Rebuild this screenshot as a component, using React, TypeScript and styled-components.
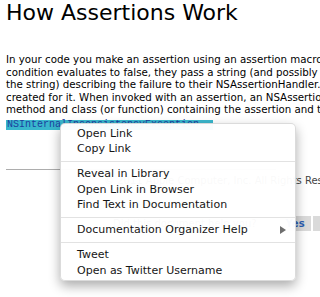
import React from "react";
import styled, { createGlobalStyle } from "styled-components";

const GlobalStyle = createGlobalStyle`
  html, body {
    margin: 0;
    padding: 0;
    background: #fff;
    overflow: hidden;
  }
  body {
    font-family: "DejaVu Sans", "Liberation Sans", sans-serif;
    color: #000;
  }
`;

const Page = styled.div`
  position: relative;
  width: 320px;
  height: 297px;
  padding-left: 6px;
  box-sizing: border-box;
  overflow: hidden;
`;

const Title = styled.h1`
  margin: 0;
  font-size: 22px;
  line-height: 26px;
  font-weight: normal;
  white-space: nowrap;
`;

const Para = styled.p`
  margin: 27px 0 0;
  font-size: 10.25px;
  line-height: 12.5px;
`;

const Line = styled.span`
  display: block;
  white-space: nowrap;
`;

const Selected = styled.div`
  width: fit-content;
  margin-top: 4.3px;
  height: 10px;
  line-height: 10px;
  padding: 0 14px 0 1px;
  font-family: "Liberation Mono", "DejaVu Sans Mono", monospace;
  font-size: 10px;
  color: #1c3f9e;
  background: #38b6cc;
  white-space: nowrap;
`;

const Rule = styled.div`
  margin-top: 39.2px;
  width: 270px;
  height: 1px;
  background: #adadad;
`;

const Copyright = styled.div`
  margin-top: 4.75px;
  padding-left: 98px;
  font-size: 10px;
  line-height: 12.5px;
  color: #444;
  white-space: nowrap;
`;

const Feedback = styled.div`
  margin-top: 28.75px;
  padding-left: 107px;
  display: flex;
  align-items: center;
  gap: 2px;
  height: 16px;
  font-size: 10px;
  color: #555;
  white-space: nowrap;
`;

const Question = styled.span`
  margin-right: 21px;
`;

const VoteButton = styled.span<{ $wide?: boolean }>`
  display: flex;
  align-items: center;
  height: 15px;
  padding: 0 ${({ $wide }) => ($wide ? "10px" : "6px")};
  background: #dadada;
  color: #2a5db0;
  font-weight: bold;
`;

const Menu = styled.div`
  position: absolute;
  left: 60px;
  top: 123px;
  width: 236px;
  box-sizing: border-box;
  padding: 1.5px 0;
  background: rgba(255, 255, 255, 0.97);
  border: 1px solid rgba(0, 0, 0, 0.14);
  border-radius: 5px;
  box-shadow: 0 5px 12px rgba(0, 0, 0, 0.33);
  font-size: 11px;
  color: #161616;
`;

const Item = styled.div`
  display: flex;
  align-items: center;
  justify-content: space-between;
  height: 15.5px;
  line-height: 15.5px;
  padding: 0 9px 0 16px;
  white-space: nowrap;
`;

const Separator = styled.div`
  height: 9.5px;
  display: flex;
  align-items: center;
  &::after {
    content: "";
    flex: 1;
    height: 1px;
    background: #e2e2e2;
  }
`;

const Arrow = () => (
  <svg width="6" height="8" viewBox="0 0 6 8">
    <polygon points="0,0 6,4 0,8" fill="#6e6e6e" />
  </svg>
);

const paragraph = [
  "In your code you make an assertion using an assertion macro—NSAssert or NSCAssert—and if the",
  "condition evaluates to false, they pass a string (and possibly arguments for substitution in",
  "the string) describing the failure to their NSAssertionHandler. Each thread has its own handler",
  "created for it. When invoked with an assertion, an NSAssertionHandler prints an error message with the",
  "method and class (or function) containing the assertion and then raises an",
];

type Entry = { label: string; submenu?: boolean } | "sep";

const menu: Entry[] = [
  { label: "Open Link" },
  { label: "Copy Link" },
  "sep",
  { label: "Reveal in Library" },
  { label: "Open Link in Browser" },
  { label: "Find Text in Documentation" },
  "sep",
  { label: "Documentation Organizer Help", submenu: true },
  "sep",
  { label: "Tweet" },
  { label: "Open as Twitter Username" },
];

export default function App() {
  return (
    <>
      <GlobalStyle />
      <Page>
        <Title>How Assertions Work</Title>
        <Para>
          {paragraph.map((text) => (
            <Line key={text}>{text}</Line>
          ))}
        </Para>
        <Selected>NSInternalInconsistencyException</Selected>
        <Rule />
        <Copyright>© 2011 Apple Computer, Inc. All Rights Reserved.</Copyright>
        <Feedback>
          <Question>Did this document help you?</Question>
          <VoteButton>Yes</VoteButton>
          <VoteButton $wide>It's good, but...</VoteButton>
        </Feedback>

        <Menu>
          {menu.map((entry, i) =>
            entry === "sep" ? (
              <Separator key={i} />
            ) : (
              <Item key={entry.label}>
                {entry.label}
                {entry.submenu ? <Arrow /> : null}
              </Item>
            )
          )}
        </Menu>
      </Page>
    </>
  );
}
